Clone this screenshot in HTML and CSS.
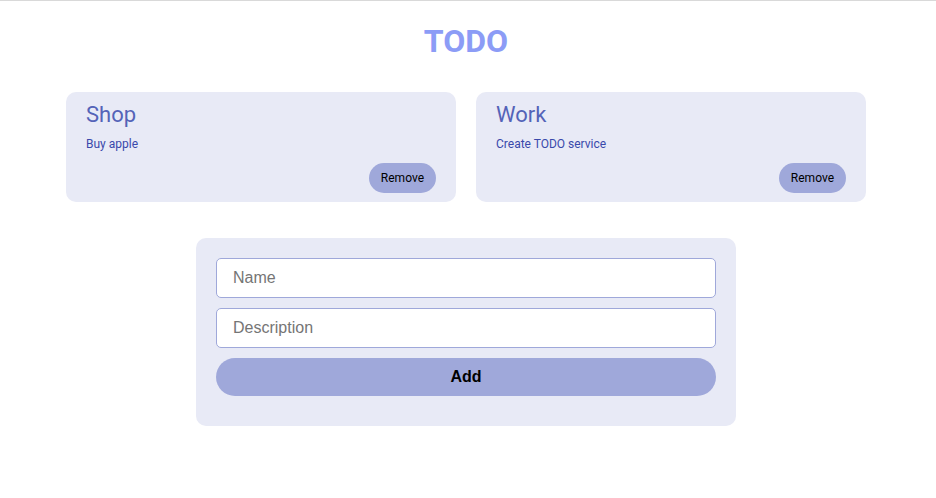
FILE: index.html
```html
<!DOCTYPE html>
<html>
<head>
<meta charset="utf-8">
<link rel="stylesheet" href="styles.css">
</head>
<body>
<div class="app">
  <h1 class="title">TODO</h1>
  <div class="cards">
    <div class="card">
      <h3 class="card-title">Shop</h3>
      <p class="card-desc">Buy apple</p>
      <div class="card-actions"><button class="remove">Remove</button></div>
    </div>
    <div class="card">
      <h3 class="card-title">Work</h3>
      <p class="card-desc">Create TODO service</p>
      <div class="card-actions"><button class="remove">Remove</button></div>
    </div>
  </div>
  <form class="form">
    <input class="field" type="text" placeholder="Name">
    <input class="field" type="text" placeholder="Description">
    <button class="add" type="button">Add</button>
  </form>
</div>
</body>
</html>
```
FILE: styles.css
```css
html, body {
  margin: 0;
  padding: 0;
  background: #fff;
}
body {
  border-top: 1px solid #d9d9d9;
  font-family: Roboto, "Liberation Sans", sans-serif;
}
.app {
  width: 932px;
  display: flex;
  flex-direction: column;
  align-items: center;
}
.title {
  margin: 21px 0 0;
  font-size: 32px;
  font-weight: 700;
  line-height: 38px;
  color: #8c9cf6;
}
.cards {
  margin-top: 32px;
  display: flex;
  gap: 20px;
}
.card {
  width: 390px;
  box-sizing: border-box;
  height: 110px;
  padding: 10px 20px 9px;
  background: #e8eaf6;
  border-radius: 10px;
  display: flex;
  flex-direction: column;
}
.card-title {
  margin: 0;
  font-size: 22px;
  font-weight: 400;
  line-height: 26px;
  color: #5463b8;
}
.card-desc {
  margin: 9px 0 0;
  font-size: 12px;
  line-height: 14px;
  color: #3949ab;
}
.card-actions {
  margin-top: auto;
  display: flex;
  justify-content: flex-end;
}
.remove {
  height: 30px;
  padding: 0 12px;
  border: none;
  border-radius: 15px;
  background: #9fa8da;
  font-family: Roboto, sans-serif;
  font-size: 12px;
  color: #000;
}
.form {
  margin-top: 36px;
  width: 540px;
  box-sizing: border-box;
  padding: 20px 20px 30px;
  background: #e8eaf6;
  border-radius: 10px;
  display: flex;
  flex-direction: column;
  gap: 10px;
}
.field {
  height: 40px;
  box-sizing: border-box;
  margin: 0;
  padding: 0 16px;
  border: 1px solid #9fa8da;
  border-radius: 5px;
  background: #fff;
  font-family: "Liberation Sans", Arial, sans-serif;
  font-size: 16px;
  color: #000;
}
.field::placeholder {
  color: #757575;
}
.add {
  height: 38px;
  border: none;
  border-radius: 19px;
  background: #9fa8da;
  font-family: "Liberation Sans", Arial, sans-serif;
  font-size: 16px;
  font-weight: 700;
  color: #000;
}
```
